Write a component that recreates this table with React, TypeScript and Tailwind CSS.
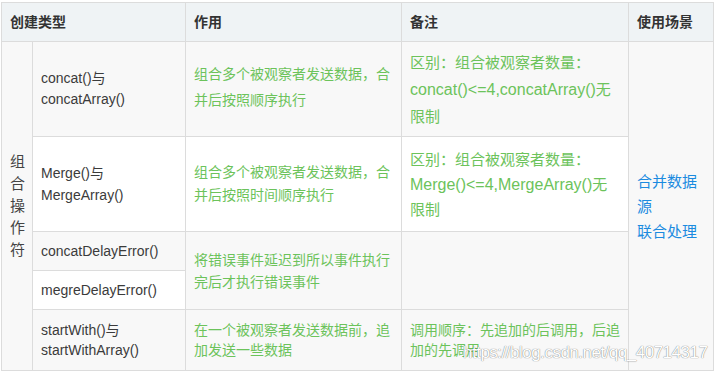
const font = { fontFamily: '"Liberation Sans", "Noto Sans CJK SC", sans-serif' };

export default function App() {
  const border = 'border border-[#dcdcdc]';
  const green = 'text-[#6cc35b]';
  return (
    <div className="relative w-[716px] h-[373px] bg-white pt-[2px] pl-[1px]" style={font}>
      <table className="w-[712px] table-fixed border-collapse">
        <colgroup>
          <col className="w-[31px]" />
          <col className="w-[153px]" />
          <col className="w-[216px]" />
          <col className="w-[227px]" />
          <col className="w-[85px]" />
        </colgroup>
        <thead>
          <tr className="h-[39px] bg-[#eff3f5] text-[14px] font-semibold text-[#333]">
            <th colSpan={2} className={`${border} px-[8px] text-left align-middle`}>创建类型</th>
            <th className={`${border} px-[8px] text-left align-middle`}>作用</th>
            <th className={`${border} px-[8px] text-left align-middle`}>备注</th>
            <th className={`${border} px-[8px] text-left align-middle`}>使用场景</th>
          </tr>
        </thead>
        <tbody>
          <tr className="h-[95px] bg-[#f8f8f8]">
            <td rowSpan={5} className={`${border} px-[8px] align-middle text-[15px] leading-[22px] text-[#444]`}>
              组合操作符
            </td>
            <td className={`${border} px-[8px] align-middle text-[14px] leading-[21px] text-[#3b3b3b]`}>
              concat()与<br />concatArray()
            </td>
            <td className={`${border} px-[8px] pb-[4px] align-middle text-[14px] leading-[26px] ${green}`}>
              组合多个被观察者发送数据，合并后按照顺序执行
            </td>
            <td className={`${border} px-[8px] align-middle text-[15px] leading-[27px] ${green}`}>
              区别：组合被观察者数量：<br />
              <span className="text-[16px]">concat()&lt;=4,concatArray()</span>无<br />限制
            </td>
            <td rowSpan={5} className={`${border} px-[8px] align-middle text-[15px] leading-[25px] text-[#1b8be0]`}>
              合并数据源<br />联合处理
            </td>
          </tr>
          <tr className="h-[95px] bg-white">
            <td className={`${border} px-[8px] align-middle text-[14px] leading-[22px] text-[#3b3b3b]`}>
              Merge()与<br />MergeArray()
            </td>
            <td className={`${border} px-[8px] align-middle text-[14px] leading-[23px] ${green}`}>
              组合多个被观察者发送数据，合并后按照时间顺序执行
            </td>
            <td className={`${border} px-[8px] align-middle text-[15px] leading-[25px] ${green}`}>
              区别：组合被观察者数量：<br />
              <span className="text-[16px]">Merge()&lt;=4,MergeArray()</span>无<br />限制
            </td>
          </tr>
          <tr className="h-[39px] bg-[#f8f8f8]">
            <td className={`${border} px-[8px] align-middle text-[14px] leading-[21px] text-[#3b3b3b]`}>
              concatDelayError()
            </td>
            <td rowSpan={2} className={`${border} px-[8px] align-middle text-[14px] leading-[22px] ${green}`}>
              将错误事件延迟到所以事件执行完后才执行错误事件
            </td>
            <td rowSpan={2} className={`${border} px-[8px]`}></td>
          </tr>
          <tr className="h-[39px]">
            <td className={`${border} bg-white px-[8px] align-middle text-[14px] leading-[21px] text-[#3b3b3b]`}>
              megreDelayError()
            </td>
          </tr>
          <tr className="h-[61px] bg-[#f8f8f8]">
            <td className={`${border} px-[8px] align-middle text-[14px] leading-[20px] text-[#3b3b3b]`}>
              startWith()与<br />startWithArray()
            </td>
            <td className={`${border} px-[8px] align-middle text-[14px] leading-[20px] ${green}`}>
              在一个被观察者发送数据前，追加发送一些数据
            </td>
            <td className={`${border} px-[8px] align-middle text-[14px] leading-[20px] ${green}`}>
              调用顺序：先追加的后调用，后追<br />加的先调用
            </td>
          </tr>
        </tbody>
      </table>
      {/* csdn watermark */}
      <div className="absolute left-[463px] top-[342px] text-[17px] leading-[22px] tracking-[-0.5px] text-white [text-shadow:0_0_1px_rgba(0,0,0,0.45),0_0_1px_rgba(0,0,0,0.3)]">
        https://blog.csdn.net/qq_40714317
      </div>
    </div>
  );
}
